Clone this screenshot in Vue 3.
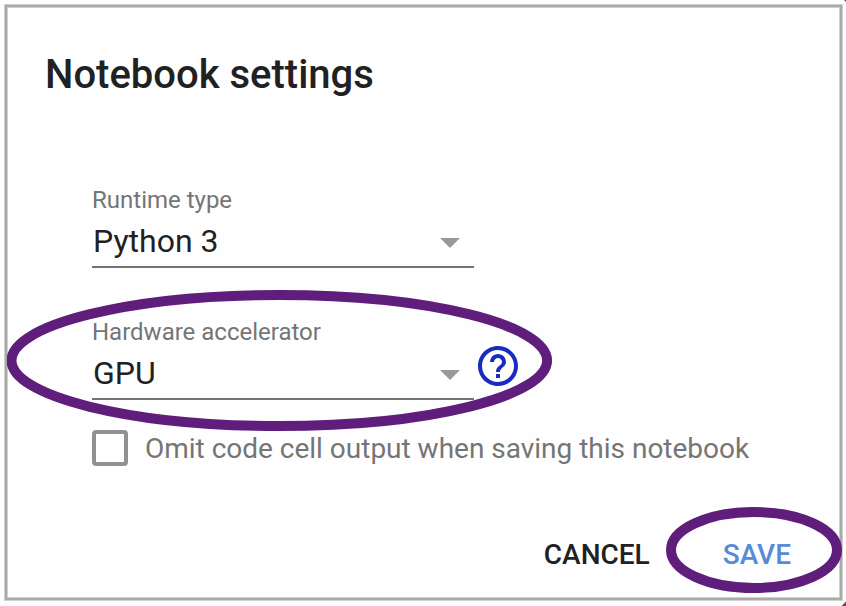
<script setup>
import { ref } from 'vue'

const fields = [
  { label: 'Runtime type', value: 'Python 3', help: false },
  { label: 'Hardware accelerator', value: 'GPU', help: true },
]
const omitOutput = ref(false)
</script>

<template>
  <div class="page">
    <main class="dialog">
      <h1 class="title">Notebook settings</h1>
      <div class="fields">
        <div v-for="field in fields" :key="field.label" class="field-row">
          <div class="field">
            <span class="label">{{ field.label }}</span>
            <div class="select">
              <span class="value">{{ field.value }}</span>
              <svg class="arrow" width="20" height="10" viewBox="0 0 20 10">
                <path d="M0 0H20L10 10Z" fill="#999" />
              </svg>
            </div>
          </div>
          <svg v-if="field.help" class="help" width="48" height="48" viewBox="0 0 24 24">
            <path
              fill="#1a2bc0"
              d="M11 18h2v-2h-2v2zm1-16C6.48 2 2 6.48 2 12s4.48 10 10 10 10-4.48 10-10S17.52 2 12 2zm0 18c-4.41 0-8-3.59-8-8s3.59-8 8-8 8 3.59 8 8-3.59 8-8 8zm0-14c-2.21 0-4 1.79-4 4h2c0-1.1.9-2 2-2s2 .9 2 2c0 2-3 1.75-3 5h2c0-2.25 3-2.5 3-5 0-2.21-1.79-4-4-4z"
            />
          </svg>
        </div>
      </div>
      <label class="option">
        <input v-model="omitOutput" class="checkbox" type="checkbox" />
        <span class="option-text">Omit code cell output when saving this notebook</span>
      </label>
      <div class="actions">
        <button class="button cancel">CANCEL</button>
        <button class="button save">SAVE</button>
      </div>
    </main>
    <svg class="marks" width="846" height="606" viewBox="0 0 846 606">
      <clipPath id="inside"><rect x="7" y="0" width="839" height="606" /></clipPath>
      <g fill="none" stroke="#5f1e7b" stroke-width="10" clip-path="url(#inside)">
        <ellipse cx="279.3" cy="360.5" rx="267.8" ry="65.5" />
        <ellipse cx="754" cy="550" rx="83" ry="38" />
      </g>
      <path d="M846 601.5V606H841.5Z" fill="#555" />
      <path d="M844 0H846V2Z" fill="#555" />
    </svg>
  </div>
</template>

<style>
body {
  margin: 0;
  background: #fefefe;
}
</style>

<style scoped>
.page {
  position: relative;
  box-sizing: border-box;
  width: 846px;
  height: 606px;
  padding: 4px 3px 5px 4px;
  overflow: hidden;
  font-family: Roboto, sans-serif;
}
.dialog {
  display: flex;
  flex-direction: column;
  box-sizing: border-box;
  width: 839px;
  height: 597px;
  padding: 47px 52px 0 40px;
  box-shadow:
    inset 0 0 0 1px #d0d0d0,
    inset 0 0 0 3px #a9a9a9,
    inset 0 0 0 4px #d0d0d0;
  background: #fefefe;
}
.title {
  margin: 0;
  padding-left: 1px;
  font-size: 40px;
  line-height: 48px;
  font-weight: 500;
  color: #212121;
}
.fields {
  display: flex;
  flex-direction: column;
  gap: 50px;
  padding: 87px 0 0 48px;
}
.field-row {
  display: flex;
  align-items: flex-end;
  height: 82px;
}
.field {
  display: flex;
  flex-direction: column;
  box-sizing: border-box;
  width: 382px;
  height: 82px;
  border-bottom: 2px solid #737373;
}
.label {
  font-size: 24px;
  line-height: 28px;
  color: #757575;
}
.select {
  display: flex;
  align-items: center;
  justify-content: space-between;
  height: 52px;
  padding: 0 14px 0 1px;
}
.value {
  margin-top: 2px;
  font-size: 32px;
  line-height: 40px;
  color: #212121;
}
.arrow {
  margin-top: 5px;
}
.help {
  margin-bottom: 10px;
}
.option {
  display: flex;
  align-items: center;
  height: 36px;
  margin: 30px 0 0 48px;
}
.checkbox {
  appearance: none;
  box-sizing: border-box;
  width: 36px;
  height: 36px;
  margin: 0;
  border: 4px solid #919191;
  border-radius: 4px;
}
.option-text {
  margin: 2px 0 0 17px;
  font-size: 28px;
  line-height: 36px;
  letter-spacing: -0.01px;
  color: #757575;
  white-space: nowrap;
}
.actions {
  display: flex;
  justify-content: flex-end;
  gap: 73px;
  margin-top: 71px;
}
.button {
  padding: 0;
  border: 0;
  background: none;
  font: 500 28px/36px Roboto, sans-serif;
}
.cancel {
  color: #212121;
}
.save {
  color: #568bd5;
}
.marks {
  position: absolute;
  inset: 0;
  pointer-events: none;
}
</style>
